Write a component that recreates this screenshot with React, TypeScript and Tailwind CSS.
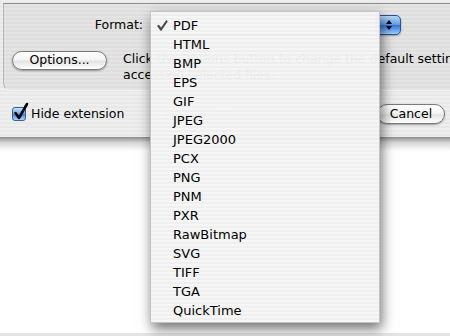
import React from "react";

const items = [
  "PDF","HTML","BMP","EPS","GIF","JPEG","JPEG2000","PCX","PNG","PNM","PXR","RawBitmap","SVG","TIFF","TGA","QuickTime",
];

function AquaButton({ label, className, faint }: { label: string; className: string; faint?: boolean }) {
  return (
    <div
      className={
        "flex shrink-0 items-center justify-center rounded-full border text-[12.5px] " +
        (faint
          ? "border-[#c8c8c8] text-[#b0b0b0] bg-[#ececec] "
          : "border-[#7a7a7a] text-black bg-[linear-gradient(#ffffff,#f4f4f4_45%,#e4e4e4_55%,#ffffff)] shadow-[0_1px_2px_rgba(0,0,0,0.35)] ") +
        className
      }
    >
      {label}
    </div>
  );
}

export default function App() {
  return (
    <div
      className="relative w-[450px] h-[336px] overflow-hidden bg-white flex flex-col"
      style={{ fontFamily: '"DejaVu Sans", sans-serif' }}
    >
      {/* window */}
      <div className="h-[137px] shrink-0 flex flex-col bg-[repeating-linear-gradient(#eeeeee_0px,#eeeeee_2px,#e8e8e8_2px,#e8e8e8_4px)]">
        {/* group box */}
        <div className="ml-[3px] mt-[3px] -mr-[20px] h-[88px] shrink-0 flex flex-col rounded-bl-[8px] border-t border-l border-b border-t-[#8e8e8e] border-l-[#b4b4b4] border-b-[#f4f4f4] bg-[repeating-linear-gradient(#e4e4e4_0px,#e4e4e4_2px,#dedede_2px,#dedede_4px)]">
          {/* format row */}
          <div className="mt-[11px] h-[20px] flex items-center">
            <div className="w-[146px] pr-[7px] text-right text-[12.5px] text-black">Format:</div>
            <div className="w-[251px] h-[20px] flex">
              <div className="flex-1 rounded-l-[5px] border border-[#8a8a8a] bg-white" />
              <div className="w-[25px] h-[20px] rounded-r-[5px] border border-[#2a4f99] bg-[linear-gradient(#b8d8f8,#5c9ae8_50%,#2f74dc_52%,#9cd0ff)] flex flex-col items-center justify-center gap-[2px] shadow-[0_1px_2px_rgba(0,0,0,0.3)]">
                <div className="w-0 h-0 border-l-[3px] border-r-[3px] border-b-[4px] border-l-transparent border-r-transparent border-b-black" />
                <div className="w-0 h-0 border-l-[3px] border-r-[3px] border-t-[4px] border-l-transparent border-r-transparent border-t-black" />
              </div>
            </div>
          </div>
          {/* options row */}
          <div className="mt-[16px] flex items-start">
            <AquaButton label="Options..." className="ml-[8px] w-[95px] h-[19px]" />
            <div className="ml-[16px] min-w-0 text-[12.5px] leading-[16px] text-black whitespace-nowrap overflow-hidden">
              <div>Click the Options button to change the default settings</div>
              <div>accessing selected files.</div>
            </div>
          </div>
        </div>
        {/* bottom row */}
        <div className="mt-[13px] h-[20px] flex items-center pr-[5px]">
          <div className="w-[153px] flex items-center pl-[12px]">
            <div className="relative w-[14px] h-[14px] shrink-0 rounded-[3px] border border-[#3a5e9a] bg-[linear-gradient(#c4e0fb,#6aa6ec_50%,#3f86e4_52%,#a8d6ff)]">
              <svg className="absolute left-[0px] top-[-6px]" width="16" height="18" viewBox="0 0 16 18">
                <path d="M2.5 11 L6 16 L14 2" fill="none" stroke="black" strokeWidth="2.6" strokeLinecap="round" strokeLinejoin="round" />
              </svg>
            </div>
            <div className="ml-[5px] text-[12.5px] text-black whitespace-nowrap">Hide extension</div>
          </div>
          <AquaButton label="New Folder" faint className="w-[95px] h-[20px]" />
          <div className="flex-1" />
          <AquaButton label="Cancel" className="w-[68px] h-[20px]" />
        </div>
      </div>
      {/* window shadow */}
      <div className="h-[14px] shrink-0 bg-[linear-gradient(#8c8c8c,#d6d6d6_40%,#ffffff)]" />
      <div className="flex-1" />
      <div className="h-[3px] shrink-0 bg-[#e4e4e4]" />

      {/* popup menu overlay */}
      <div className="absolute left-[150px] top-[11px] w-[230px] h-[312px] py-[4px] bg-[repeating-linear-gradient(rgba(246,246,246,0.97)_0px,rgba(246,246,246,0.97)_2px,rgba(239,239,239,0.97)_2px,rgba(239,239,239,0.97)_4px)] border border-[#c4c4c4] shadow-[2px_6px_12px_rgba(0,0,0,0.55)]">
        {items.map((it, i) => (
          <div key={it} className="relative h-[19px] flex items-center pl-[22px] text-[13px] text-black leading-none">
            {i === 0 && (
              <svg className="absolute left-[6px] top-[4px]" width="11" height="11" viewBox="0 0 11 11">
                <path d="M1.5 6 L4 9.5 L9.5 1.5" fill="none" stroke="#4a4a4a" strokeWidth="2.2" strokeLinecap="round" strokeLinejoin="round" />
              </svg>
            )}
            {it}
          </div>
        ))}
      </div>
    </div>
  );
}
